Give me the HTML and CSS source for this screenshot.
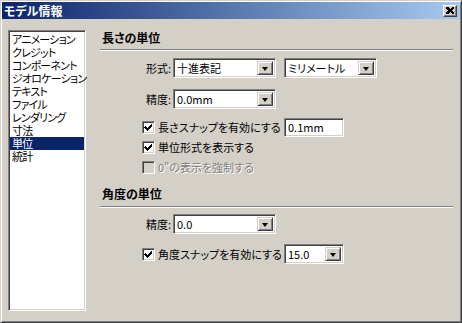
FILE: index.html
```html
<!DOCTYPE html>
<html lang="ja">
<head>
  <meta charset="UTF-8" />
  <title>モデル情報</title>
  <link rel="stylesheet" href="styles.css">
</head>
<body>
  <div class="window">
    <div class="titlebar">
      <span class="title">モデル情報</span>
      <span class="close-btn">
        <svg width="8" height="7" viewBox="0 0 8 7" shape-rendering="crispEdges"><path d="M0 0h2l2 2 2-2h2v1l-2 2.5 2 2.5v1h-2l-2-2-2 2h-2v-1l2-2.5-2-2.5z" fill="#000"/></svg>
      </span>
    </div>

    <div class="body">
      <ul class="nav">
        <li>アニメーション</li>
        <li>クレジット</li>
        <li>コンポーネント</li>
        <li>ジオロケーション</li>
        <li>テキスト</li>
        <li>ファイル</li>
        <li>レンダリング</li>
        <li>寸法</li>
        <li class="selected">単位</li>
        <li>統計</li>
      </ul>

      <div class="panel">
        <h3 class="group-title">長さの単位</h3>
        <div class="rule"></div>

        <div class="field-row first">
          <span class="field-label">形式:</span>
          <div class="combo wide"><span class="combo-text">十進表記</span><span class="drop-btn"><i class="arrow"></i></span></div>
          <div class="combo medium"><span class="combo-text">ミリメートル</span><span class="drop-btn"><i class="arrow"></i></span></div>
        </div>

        <div class="field-row second">
          <span class="field-label">精度:</span>
          <div class="combo wide"><span class="combo-text">0.0mm</span><span class="drop-btn"><i class="arrow"></i></span></div>
        </div>

        <div class="check-row snap-row">
          <label class="check">
            <span class="box"><svg width="9" height="9" viewBox="0 0 9 9" shape-rendering="crispEdges"><path d="M1 3h1v1h1v1h1v-1h1v-1h1v-1h1v-1h1v3h-1v1h-1v1h-1v1h-1v1h-1v-1h-1v-1h-1v-1h-1z" fill="#000"/></svg></span>
            <span class="check-text">長さスナップを有効にする</span>
          </label>
          <div class="textbox">0.1mm</div>
        </div>

        <div class="check-row">
          <label class="check">
            <span class="box"><svg width="9" height="9" viewBox="0 0 9 9" shape-rendering="crispEdges"><path d="M1 3h1v1h1v1h1v-1h1v-1h1v-1h1v-1h1v3h-1v1h-1v1h-1v1h-1v1h-1v-1h-1v-1h-1v-1h-1z" fill="#000"/></svg></span>
            <span class="check-text">単位形式を表示する</span>
          </label>
        </div>

        <div class="check-row disabled">
          <label class="check">
            <span class="box"></span>
            <span class="check-text">0"の表示を強制する</span>
          </label>
        </div>

        <h3 class="group-title angle">角度の単位</h3>
        <div class="rule rule-angle"></div>

        <div class="field-row angle-precision">
          <span class="field-label">精度:</span>
          <div class="combo wide"><span class="combo-text">0.0</span><span class="drop-btn"><i class="arrow"></i></span></div>
        </div>

        <div class="check-row angle-snap">
          <label class="check">
            <span class="box"><svg width="9" height="9" viewBox="0 0 9 9" shape-rendering="crispEdges"><path d="M1 3h1v1h1v1h1v-1h1v-1h1v-1h1v-1h1v3h-1v1h-1v1h-1v1h-1v1h-1v-1h-1v-1h-1v-1h-1z" fill="#000"/></svg></span>
            <span class="check-text">角度スナップを有効にする</span>
          </label>
          <div class="combo small"><span class="combo-text">15.0</span><span class="drop-btn"><i class="arrow"></i></span></div>
        </div>
      </div>
    </div>
  </div>
</body>
</html>
```

FILE: styles.css
```css
* {
  box-sizing: border-box;
}

body {
  margin: 0;
  background: #d4d0c8;
  font-family: "Noto Sans CJK JP", "Noto Sans", sans-serif;
  font-size: 11px;
  font-feature-settings: "palt";
  color: #000;
}

.window {
  width: 462px;
  height: 323px;
  padding: 1px;
  background: #d4d0c8;
  border: 1px solid;
  border-color: #d4d0c8 #404040 #404040 #d4d0c8;
  box-shadow: inset 1px 1px #fff, inset -1px -1px #808080;
}

.titlebar {
  height: 17px;
  display: flex;
  align-items: center;
  justify-content: space-between;
  padding: 0 3px 0 2px;
  background: linear-gradient(to right, #0a246a, #a6caf0);
}

.title {
  color: #fff;
  font-size: 12px;
  font-weight: bold;
  line-height: 17px;
}

.close-btn {
  width: 14px;
  height: 12px;
  display: flex;
  align-items: center;
  justify-content: center;
  background: #d4d0c8;
  border: 1px solid;
  border-color: #fff #404040 #404040 #fff;
  box-shadow: inset -1px -1px #808080;
}

.body {
  display: flex;
  padding: 11px 6px 0 6px;
}

.nav {
  list-style: none;
  margin: 0;
  padding: 1px 0;
  width: 78px;
  height: 281px;
  background: #fff;
  border: 1px solid;
  border-color: #808080 #fff #fff #808080;
  box-shadow: inset 1px 1px #404040, inset -1px -1px #d4d0c8;
}

.nav li {
  height: 13px;
  line-height: 13px;
  margin: 0 1px;
  padding-left: 2px;
  letter-spacing: -0.8px;
  white-space: nowrap;
}

.nav li:first-child {
  margin-top: 1px;
}

.nav li.selected {
  background: #0a246a;
  color: #fff;
}

.panel {
  width: 353px;
  margin-left: 14px;
}

.group-title {
  margin: 0;
  padding-left: 2px;
  font-size: 12px;
  font-weight: bold;
  line-height: 16px;
  height: 16px;
}

.group-title.angle {
  margin-top: 9px;
}

.rule {
  margin-top: 3px;
  height: 2px;
  border-top: 1px solid #808080;
  border-bottom: 1px solid #fff;
}

.rule-angle {
  margin-top: 4px;
}

.field-row {
  display: flex;
  align-items: center;
  padding-left: 38px;
  height: 20px;
}

.field-row.first {
  margin-top: 7px;
}

.field-row.second {
  margin-top: 11px;
}

.field-row.angle-precision {
  margin-top: 6px;
}

.field-label {
  width: 33px;
  text-align: right;
  margin-right: 2px;
  line-height: 20px;
}

.combo {
  height: 20px;
  display: flex;
  align-items: stretch;
  background: #fff;
  border: 1px solid;
  border-color: #808080 #fff #fff #808080;
  box-shadow: inset 1px 1px #404040, inset -1px -1px #d4d0c8;
  padding: 2px;
}

.combo.wide {
  width: 103px;
}

.combo.medium {
  width: 93px;
  margin-left: 8px;
}

.combo.small {
  width: 60px;
}

.combo-text {
  flex: 1;
  line-height: 14px;
  padding-left: 1px;
  white-space: nowrap;
}

.drop-btn {
  width: 16px;
  flex: none;
  display: flex;
  align-items: center;
  justify-content: center;
  background: #d4d0c8;
  border: 1px solid;
  border-color: #d4d0c8 #404040 #404040 #d4d0c8;
  box-shadow: inset 1px 1px #fff, inset -1px -1px #808080;
}

.arrow {
  width: 0;
  height: 0;
  border-left: 3.5px solid transparent;
  border-right: 3.5px solid transparent;
  border-top: 4px solid #000;
  margin-top: 1px;
}

.check-row {
  display: flex;
  align-items: center;
  height: 20px;
  padding-left: 42px;
}

.check-row.snap-row {
  margin-top: 8px;
}

.check-row.angle-snap {
  margin-top: 10px;
}

.check {
  display: flex;
  align-items: center;
  width: 142px;
}

.box {
  width: 13px;
  height: 13px;
  flex: none;
  display: flex;
  align-items: center;
  justify-content: center;
  background: #fff;
  border: 1px solid;
  border-color: #808080 #fff #fff #808080;
  box-shadow: inset 1px 1px #404040, inset -1px -1px #d4d0c8;
}

.check-text {
  margin-left: 3px;
  white-space: nowrap;
}

.disabled .box {
  background: #d4d0c8;
}

.disabled .check-text {
  color: #808080;
  text-shadow: 1px 1px #fff;
}

.textbox {
  width: 60px;
  height: 19px;
  padding: 0 3px;
  line-height: 17px;
  background: #fff;
  border: 1px solid;
  border-color: #808080 #fff #fff #808080;
  box-shadow: inset 1px 1px #404040, inset -1px -1px #d4d0c8;
}
```
